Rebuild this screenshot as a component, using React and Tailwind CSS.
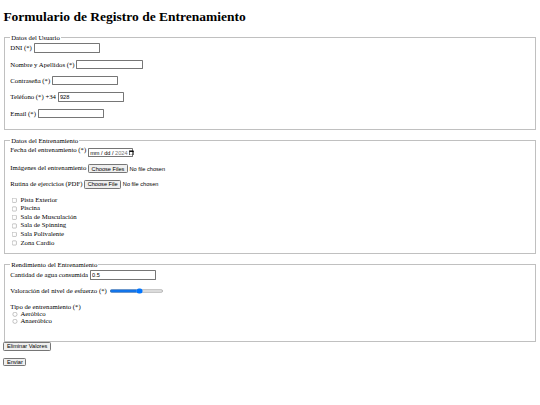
import React from 'react'

// page laid out at its natural 1280px size, shrunk to the 540px window
const input = "w-[157px] h-[22px] border border-[#767676] rounded-[2px] px-[3px] bg-white text-[13.33px] leading-[normal] text-black font-['Liberation_Sans',Arial,sans-serif]"
const btn = "border border-[#767676] rounded-[3px] bg-[#efefef] px-[6px] py-[1px] text-[13.33px] leading-[normal] text-black font-['Liberation_Sans',Arial,sans-serif]"
const fieldset = "mx-[2px] border-2 [border-style:groove] border-[#c0c0c0] pt-[5.6px] px-[12px] pb-[10px] min-w-0"
const check = "m-[3px_3px_3px_4px] w-[13px] h-[13px] align-[-3px]"
const radio = "m-[3px_3px_0px_5px] w-[13px] h-[13px] align-[-3px]"

function FileField({ label }) {
  return (
    <span className="text-[13.33px] font-['Liberation_Sans',Arial,sans-serif]">
      <button type="button" className={btn + ' mr-[4px]'}>{label}</button>
      No file chosen
    </span>
  )
}

function DateField() {
  return (
    <span className="inline-flex items-center gap-[4px] w-[107px] h-[22px] border border-[#767676] rounded-[2px] px-[3px] bg-white align-[-5px] whitespace-nowrap text-[13.33px] leading-[normal] font-['Liberation_Sans',Arial,sans-serif]">
      <span className="text-black">mm / dd / <span className="text-[#757575]">2024</span></span>
      <svg width="12" height="13" viewBox="0 0 12 13" className="ml-auto shrink-0">
        <rect x="1" y="2" width="10" height="10" fill="none" stroke="#000" strokeWidth="1.3" />
        <rect x="1" y="2" width="10" height="2.5" fill="#000" />
      </svg>
    </span>
  )
}

const salas = ['Pista Exterior', 'Piscina', 'Sala de Musculación', 'Sala de Spinning', 'Sala Polivalente', 'Zona Cardio']

export default function App() {
  return (
    <div className="[zoom:0.421875] w-[1280px] min-h-[960px] bg-white p-[8px] text-[16px] leading-[normal] text-black font-['Liberation_Serif','Times_New_Roman',serif]">
      <h1 className="mt-[13.44px] mb-[21.44px] text-[32px] leading-[normal] font-bold">Formulario de Registro de Entrenamiento</h1>

      <form>
        <fieldset className={fieldset}>
          <legend className="px-[2px]">Datos del Usuario</legend>
          <label>DNI (*)</label> <input type="text" className={input} /><br /><br />
          <label>Nombre y Apellidos (*)</label> <input type="text" className={input} /><br /><br />
          <label>Contraseña (*)</label> <input type="password" className={input} /><br /><br />
          <label>Teléfono (*) +34</label> <input type="tel" defaultValue="928" className={input} /><br /><br />
          <label>Email (*)</label> <input type="email" className={input} /><br /><br />
        </fieldset>
        <br />

        <fieldset className={fieldset}>
          <legend className="px-[2px]">Datos del Entrenamiento</legend>
          <label>Fecha del entrenamiento (*)</label> <DateField /><br /><br />
          <label>Imágenes del entrenamiento</label> <FileField label="Choose Files" /><br /><br />
          <label>Rutina de ejercicios (PDF)</label> <FileField label="Choose File" /><br /><br />
          {salas.map(s => (
            <React.Fragment key={s}>
              <input type="checkbox" className={check} /> {s}<br />
            </React.Fragment>
          ))}
          <div className="h-[4px]" />
        </fieldset>
        <br />

        <fieldset className={fieldset}>
          <legend className="px-[2px]">Rendimiento del Entrenamiento</legend>
          <label>Cantidad de agua consumida</label> <input type="number" defaultValue="0.5" className={input} /><br /><br />
          <label>Valoración del nivel de esfuerzo (*)</label> <input type="range" min="1" max="10" defaultValue="6" className="w-[129px] h-[16px] mx-[2px] mt-[2px] mb-[4px] align-[-4px]" /><br /><br />
          Tipo de entrenamiento (*)<br />
          <input type="radio" name="tipo" className={radio} /> Aeróbico<br />
          <input type="radio" name="tipo" className={radio} /> Anaeróbico<br /><br />
          <div className="h-[12px]" />
        </fieldset>

        <button type="reset" className={btn}>Eliminar Valores</button><br /><br />
        <button type="submit" className={btn}>Enviar</button>
      </form>
    </div>
  )
}
